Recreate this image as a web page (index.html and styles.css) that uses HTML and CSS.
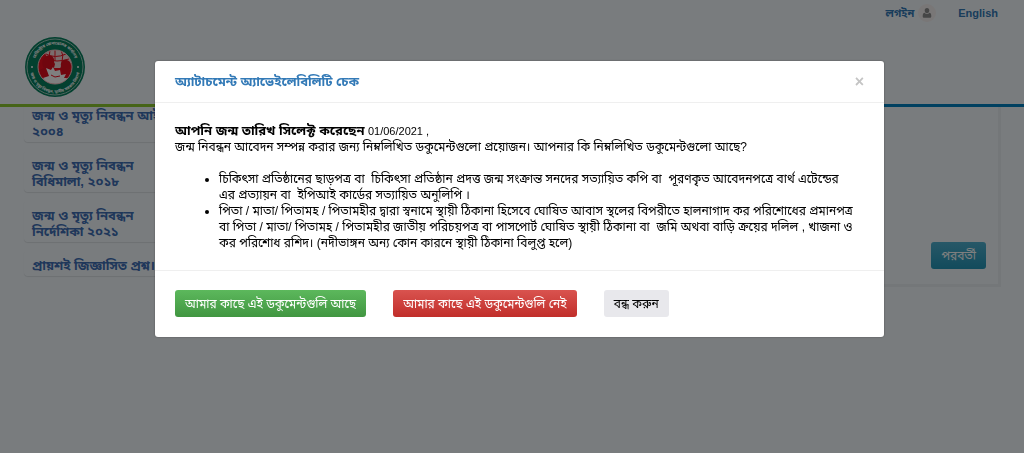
FILE: index.html
```
<!DOCTYPE html>
<html lang="bn">
<head>
  <meta charset="UTF-8">
  <title>জন্ম ও মৃত্যু নিবন্ধন</title>
  <meta name="viewport" content="width=device-width, initial-scale=1.0">
  <link rel="stylesheet" href="styles.css">
</head>
<body>
  <header class="site-header">
    <nav class="top-links">
      <a href="#" class="login">লগইন
        <span class="user-icon">
          <svg width="10" height="10" viewBox="0 0 10 10"><path d="M5 0C3.500 0 2.700 1.100 2.700 2.500S3.600 5.300 5 5.300 7.300 4 7.300 2.500 6.500 0 5 0zM2.600 4.800C1.300 5 .7 6.300.7 8.200.7 9.200 1.300 9.800 2.200 9.800h5.600c.9 0 1.500-.6 1.500-1.600 0-1.900-.6-3.200-1.900-3.400C6.700 5.600 6 6 5 6s-1.700-.4-2.400-1.200z" fill="#8c8c8c"/></svg>
        </span>
      </a>
      <a href="#">English</a>
    </nav>
    <a href="#" class="logo" aria-label="Home">
      <svg width="62" height="62" viewBox="0 0 62 62">
        <defs>
          <path id="arcTop" d="M11 36A21 21 0 1 1 51 36"/>
          <path id="arcBottom" d="M6 32A25 25 0 0 0 56 32"/>
          <clipPath id="disc"><circle cx="31" cy="31" r="17"/></clipPath>
        </defs>
        <circle cx="31" cy="31" r="30" fill="#07805f"/>
        <circle cx="31" cy="31" r="28" fill="none" stroke="#9fc9bd" stroke-width="1"/>
        <circle cx="31" cy="31" r="17" fill="#f10f1f"/>
        <g clip-path="url(#disc)">
          <path d="M20 14h23l5 10-3 8H29l-6-10z" fill="#f5dada"/>
          <path d="M22 18q9 5 20 0M23 23q9 4 22 0M31 13v12M26 14q-2 6 1 12M37 14q3 5 1 12" fill="none" stroke="#f10f1f" stroke-width="1"/>
          <path d="M13 38c1-4 5-5 7-6-3-4-2-10 2-12 5-2 9 1 8 6l1 2-1 4-3 1 1 6-5 8H13z" fill="#e00c1c"/>
          <path d="M50 40c-1-4-3-5-5-6 3-4 2-9-2-10-4-1-7 2-6 6l-1 3 2 2-1 6 6 6z" fill="#e00c1c"/>
          <path d="M22 32l5 2 2-3 2 4 5-1 1 5 5-1-2 4c4 0 5 1 3 3-5 4-17 4-22 0l-2-3 6-2z" fill="#fff"/>
          <path d="M27 39l4 2 5-1" fill="none" stroke="#f10f1f" stroke-width="1"/>
        </g>
        <circle cx="31" cy="31" r="17" fill="none" stroke="#f3d0d0" stroke-width="1"/>
        <g class="seal-text">
          <text><textPath href="#arcTop" startOffset="50%">রেজিস্ট্রার জেনারেলের কার্যালয়</textPath></text>
          <text><textPath href="#arcBottom" startOffset="50%">জন্ম ও মৃত্যু নিবন্ধন, স্থানীয় সরকার বিভাগ</textPath></text>
        </g>
        <circle cx="8" cy="31" r="1" fill="#fff"/>
        <circle cx="54" cy="31" r="1" fill="#fff"/>
      </svg>
    </a>
  </header>

  <main class="page">
    <ul class="side-menu">
      <li><a href="#">জন্ম ও মৃত্যু নিবন্ধন আইন, ২০০৪</a></li>
      <li><a href="#">জন্ম ও মৃত্যু নিবন্ধন বিধিমালা, ২০১৮</a></li>
      <li><a href="#">জন্ম ও মৃত্যু নিবন্ধন নির্দেশিকা ২০২১</a></li>
      <li><a href="#">প্রায়শই জিজ্ঞাসিত প্রশ্ন।</a></li>
    </ul>
    <section class="panel">
      <button type="button" class="btn btn-next">পরবর্তী</button>
    </section>
  </main>

  <!-- Attachment check dialog -->
  <div class="backdrop">
    <div class="modal" role="dialog" aria-modal="true" aria-labelledby="modalTitle">
      <div class="modal-header">
        <h4 id="modalTitle">অ্যাটাচমেন্ট অ্যাভেইলেবিলিটি চেক</h4>
        <button type="button" class="close" aria-label="Close">×</button>
      </div>
      <div class="modal-body">
        <p><strong>আপনি জন্ম তারিখ সিলেক্ট করেছেন</strong> <span class="date">01/06/2021 ,</span></p>
        <p>জন্ম নিবন্ধন আবেদন সম্পন্ন করার জন্য নিম্নলিখিত ডকুমেন্টগুলো প্রয়োজন। আপনার কি নিম্নলিখিত ডকুমেন্টগুলো আছে?</p>
        <ul>
          <li>চিকিৎসা প্রতিষ্ঠানের ছাড়পত্র বা &nbsp;চিকিৎসা প্রতিষ্ঠান প্রদত্ত জন্ম সংক্রান্ত সনদের সত্যায়িত কপি বা &nbsp;পূরণকৃত আবেদনপত্রে বার্থ এটেন্ডের<br>
            এর প্রত্যায়ন বা &nbsp;ইপিআই কার্ডের সত্যায়িত অনুলিপি ।</li>
          <li>পিতা / মাতা/ পিতামহ / পিতামহীর দ্বারা স্বনামে স্থায়ী ঠিকানা হিসেবে ঘোষিত আবাস স্থলের বিপরীতে হালনাগাদ কর পরিশোধের প্রমানপত্র<br>
            বা পিতা / মাতা/ পিতামহ / পিতামহীর জাতীয় পরিচয়পত্র বা পাসপোর্ট ঘোষিত স্থায়ী ঠিকানা বা &nbsp;জমি অথবা বাড়ি ক্রয়ের দলিল , খাজনা ও<br>
            কর পরিশোধ রশিদ। (নদীভাঙ্গন অন্য কোন কারনে স্থায়ী ঠিকানা বিলুপ্ত হলে)</li>
        </ul>
      </div>
      <div class="modal-footer">
        <button type="button" class="btn btn-success">আমার কাছে এই ডকুমেন্টগুলি আছে</button>
        <button type="button" class="btn btn-danger">আমার কাছে এই ডকুমেন্টগুলি নেই</button>
        <button type="button" class="btn btn-close">বন্ধ করুন</button>
      </div>
    </div>
  </div>
</body>
</html>
```
FILE: styles.css
```
* { margin: 0; padding: 0; box-sizing: border-box; }
body {
  font-family: "Liberation Sans", "Noto Sans Bengali", Arial, sans-serif;
  font-size: 12px;
  line-height: 16px;
  color: #000;
  background-color: #f3f9fd;
}
a { color: #337ab7; text-decoration: none; }
ul { list-style: none; }

/* Header */
.site-header {
  position: relative;
  z-index: 1;
  height: 107px;
  padding: 0 24px;
  background-color: #f3f9fd;
  border-bottom: 3px solid;
  border-image: linear-gradient(to right, #8cc830 50%, #0080c0 50%) 1;
}
.top-links {
  display: flex;
  justify-content: flex-end;
  gap: 22px;
  height: 36px;
  padding: 4px 2px 0 0;
  font-size: 11px;
  line-height: 18px;
  font-weight: bold;
}
.login { display: flex; gap: 4px; }
.user-icon {
  display: flex;
  align-items: center;
  justify-content: center;
  width: 18px;
  height: 18px;
  border-radius: 50%;
  background-color: #f2eeee;
}
.logo { display: block; width: 62px; height: 62px; }
.seal-text text {
  font-size: 4px;
  font-weight: bold;
  fill: #fff;
  text-anchor: middle;
}

/* Page */
.page {
  display: flex;
  margin-top: -7px;
  padding: 0 23px 0 24px;
}
.side-menu { width: 148px; }
.side-menu li {
  margin-bottom: 8px;
  padding: 8px 0 2px 8px;
  border-radius: 4px;
  box-shadow: 0 1px 1px rgba(0, 0, 0, 0.1);
  font-size: 13px;
  font-weight: bold;
}
.side-menu a { color: #3f6fb5; }
.panel {
  flex: 1;
  display: flex;
  justify-content: flex-end;
  align-items: flex-end;
  height: 187px;
  padding: 0 12px 15px 0;
  border: 3px solid #e9eff3;
}

/* Buttons */
.btn {
  height: 27px;
  padding: 0 10px;
  border: 0;
  border-radius: 3px;
  font-family: inherit;
  font-size: 12px;
  line-height: 26px;
  color: #fff;
  white-space: nowrap;
  cursor: pointer;
}
.btn-next { background: linear-gradient(#4fb0cf, #2496b8); }
.btn-success { background: linear-gradient(#5cb85c, #419641); }
.btn-danger { background: linear-gradient(#d9534f, #c12e2a); }
.btn-close { background-color: #e8e8ec; color: #000; }

/* Modal */
.backdrop {
  position: fixed;
  inset: 0;
  z-index: 10;
  padding: 61px 15px 0 30px;
  background-color: rgba(0, 0, 0, 0.5);
}
.modal {
  max-width: 729px;
  margin: 0 auto;
  background-color: #fff;
  border-radius: 3px;
  box-shadow: 0 0 2px rgba(0, 0, 0, 0.4);
}
.modal-header {
  display: flex;
  justify-content: space-between;
  align-items: center;
  height: 42px;
  padding: 0 20px;
  border-bottom: 1px solid #efefef;
}
.modal-header h4 { font-size: 13px; color: #337ab7; }
.close {
  border: 0;
  background: none;
  font: bold 16px "Liberation Sans", Arial, sans-serif;
  color: #c4c4c4;
  cursor: pointer;
}
.modal-body { padding: 20px 20px 19px; }
.modal-body strong { font-size: 13px; }
.date { font-size: 11px; }
.modal-body ul {
  margin-top: 16px;
  padding-left: 44px;
  list-style: disc;
}
.modal-footer {
  display: flex;
  gap: 27px;
  padding: 19px 20px 20px;
  border-top: 1px solid #efefef;
}
```
